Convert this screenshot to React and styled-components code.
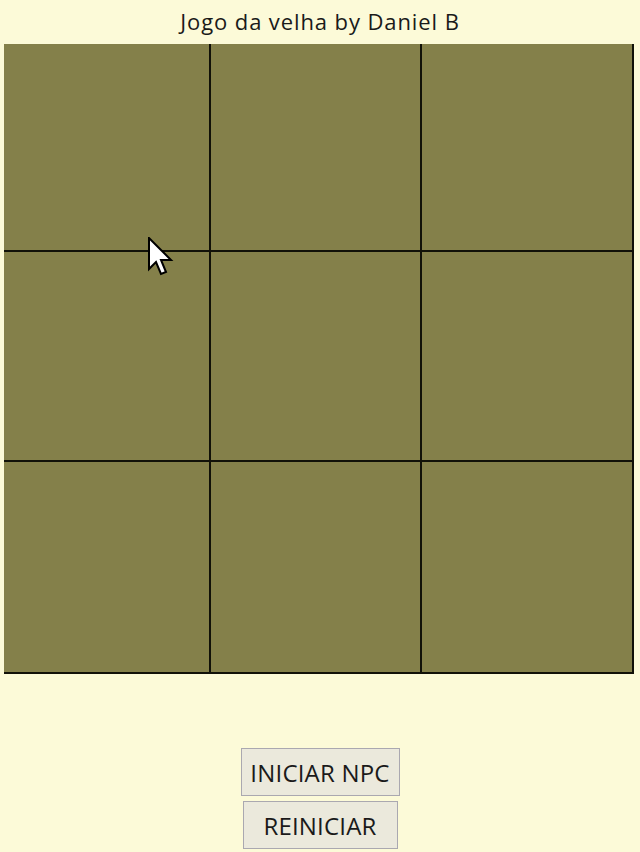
import React from 'react';
import styled, { createGlobalStyle } from 'styled-components';

const Global=createGlobalStyle`
	html, body{
		margin: 0;
		padding: 0;
		background: #fcfad8;
	}
	body{
		font-family: "Open Sans", "DejaVu Sans", sans-serif;
		color: #1a1a1a;
	}
`;

const Page=styled.div`
	position: relative;
	width: 640px;
	height: 852px;
	display: flex;
	flex-direction: column;
	align-items: center;
`;

const Title=styled.div`
	height: 44px;
	line-height: 42px;
	font-size: 22px;
	width: 100%;
	text-align: center;
	letter-spacing: 0.9px;
`;

const Board=styled.div`
	align-self: flex-start;
	margin-left: 4px;
	width: 630px;
	height: 630px;
	box-sizing: border-box;
	display: grid;
	grid-template-columns: 205px 209px 210px;
	grid-template-rows: 206px 208px 210px;
	gap: 2px;
	padding: 0 2px 2px 0;
	background: #111108;
`;

const Cell=styled.div`
	background: #84804a;
`;

const Controls=styled.div`
	margin-top: 74px;
	display: flex;
	flex-direction: column;
	align-items: center;
	gap: 5px;
`;

const Button=styled.button`
	font-family: "Open Sans", "DejaVu Sans", sans-serif;
	font-size: 24px;
	color: #1a1a1a;
	background: #ebe9dc;
	border: 1px solid #aaa8b0;
	padding: 0;
	width: ${p=>p.w}px;
	height: 48px;
	letter-spacing: 0.2px;
`;

const Cursor=styled.svg`
	position: absolute;
	left: 148px;
	top: 237px;
`;

export default function App(){
	return (
		<Page>
			<Global/>
			<Title>Jogo da velha by Daniel B</Title>
			<Board>
				{Array.from({length: 9}).map((_, i)=><Cell key={i}/>)}
			</Board>
			<Controls>
				<Button w={159}>INICIAR NPC</Button>
				<Button w={155}>REINICIAR</Button>
			</Controls>
			<Cursor width="28" height="42" viewBox="0 0 14 21">
				<path d="M0.5 0.5 L0.5 16 L4 12.5 L6.5 18.5 L9 17.5 L6.5 11.5 L11.5 11.5 Z" fill="#fff" stroke="#000" strokeWidth="1" strokeLinejoin="miter"/>
			</Cursor>
		</Page>
	);
}
